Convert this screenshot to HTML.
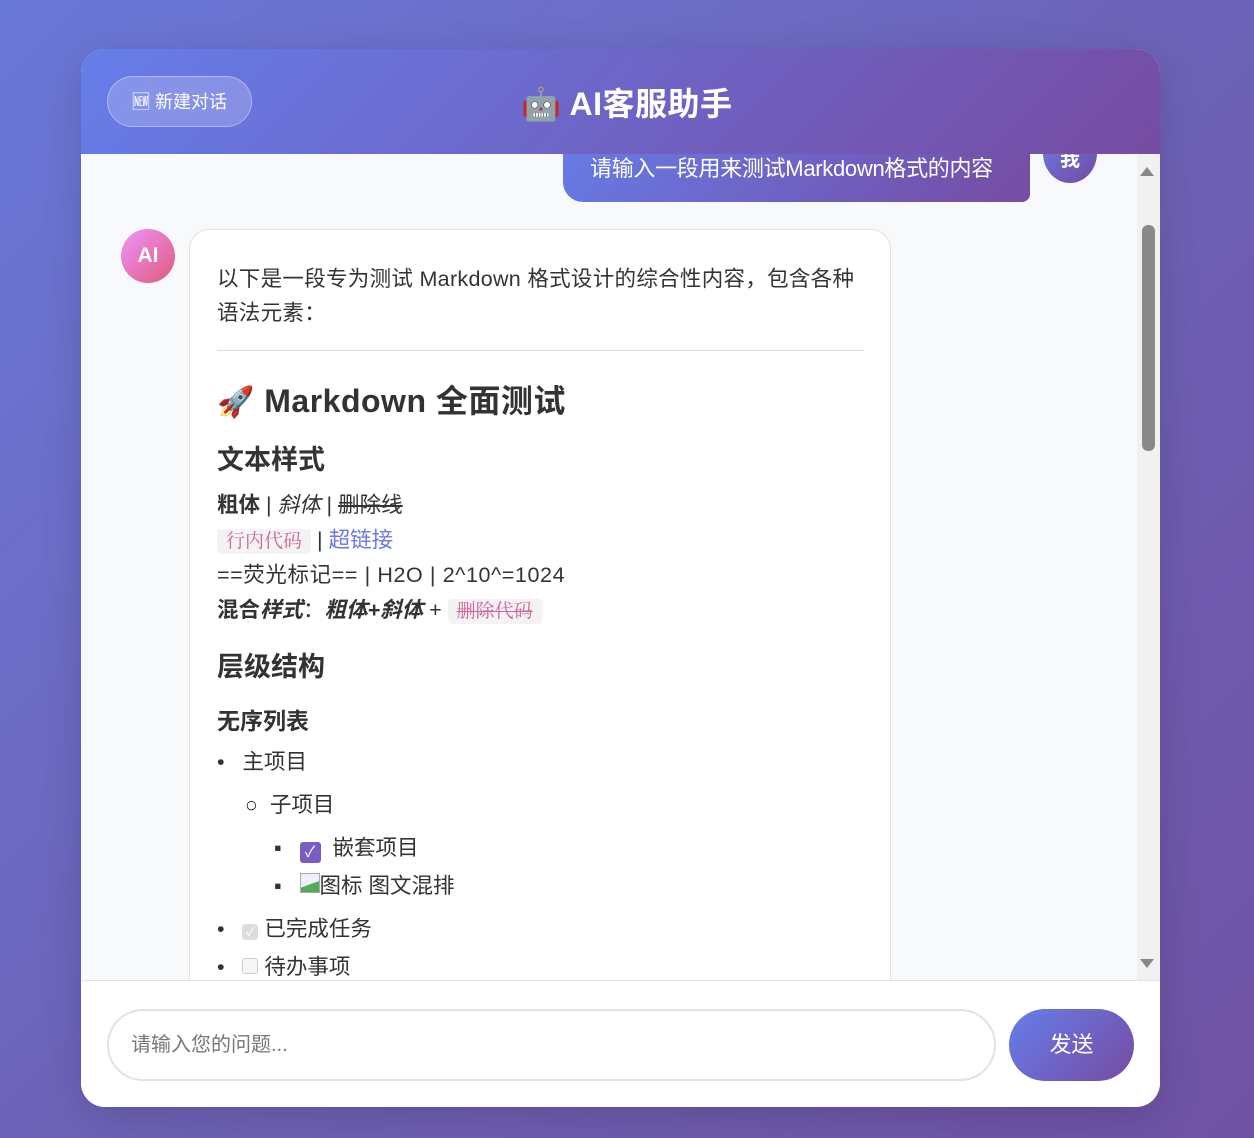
<!DOCTYPE html>
<html><head><meta charset="utf-8"><style>
*{margin:0;padding:0;box-sizing:border-box}
body{width:1254px;height:1138px;overflow:hidden;background:linear-gradient(135deg,#6a78d8 0%,#6d63b8 50%,#6f52a4 100%);font-family:"Liberation Sans","Noto Sans CJK SC",sans-serif;color:#333;position:relative}
.box{position:absolute;left:81px;top:49px;width:1079px;height:1058px;border-radius:24px;overflow:hidden;background:#f8f9fa;box-shadow:0 10px 40px rgba(0,0,0,.15)}
.hdr{position:absolute;left:0;top:0;width:1079px;height:105px;background:linear-gradient(135deg,#667eea,#764ba2);z-index:3}
.newb{position:absolute;left:26px;top:27px;width:145px;height:51px;border-radius:26px;background:rgba(255,255,255,.2);border:1px solid rgba(255,255,255,.35);color:#fff;font-size:18px;line-height:51px;text-align:center}
.title{position:absolute;left:440px;top:32px;color:#fff;font-size:32px;font-weight:bold;line-height:46px;letter-spacing:0.5px}
.abs{position:absolute}
.ub{left:482px;top:70px;width:467px;height:83px;border-radius:0 0 8px 20px;background:linear-gradient(135deg,#667eea,#764ba2);color:#fff;font-size:22px;padding-top:32px;padding-left:27px;letter-spacing:-0.3px}
.ua{left:962px;top:74px;width:54px;height:60px;border-radius:50%;background:linear-gradient(135deg,#667eea,#764ba2);color:#fff;font-weight:bold;font-size:20px;text-align:center;padding-top:20px}
.aa{left:40px;top:180px;width:54px;height:54px;border-radius:50%;background:linear-gradient(135deg,#f093fb,#e05a7c);color:#fff;font-weight:bold;font-size:21px;text-align:center;line-height:54px}
.bub{left:108px;top:180px;width:702px;height:800px;background:#fff;border:1px solid #e3e3e3;border-radius:20px;padding:30px 27px;font-size:21.5px}
.sb{left:1056px;top:105px;width:23px;height:826px;background:#f1f1f1}
.thumb{left:1061px;top:176px;width:13px;height:226px;background:#8a8a8a;border-radius:6px}
.inp{position:absolute;left:0;top:931px;width:1079px;height:127px;background:#fff;border-top:1px solid #e2e2e2;z-index:3}
.field{position:absolute;left:26px;top:28px;width:889px;height:72px;border:2px solid #e2e2e2;border-radius:36px;font-size:20px;color:#777;padding-left:22px;line-height:68px}
.send{position:absolute;left:928px;top:28px;width:125px;height:72px;border-radius:36px;background:linear-gradient(135deg,#667eea,#764ba2);color:#fff;font-size:22px;text-align:center;line-height:72px}
.l{position:absolute;left:27px;white-space:nowrap}
code{background:#f3f3f3;color:#d0639a;border-radius:4px;padding:2px 9px;font-size:19px;font-family:"Liberation Serif","Noto Serif CJK SC",serif}
</style></head><body>
<div class="box">
<div class="hdr">
<div class="newb">🆕 新建对话</div>
<div class="title">🤖 AI客服助手</div>
</div>
<div class="abs ub">请输入一段用来测试Markdown格式的内容</div>
<div class="abs ua">我</div>
<div class="abs aa">AI</div>
<div class="abs bub">
<div class="l" style="top:32px;line-height:34px;letter-spacing:0.3px">以下是一段专为测试 Markdown 格式设计的综合性内容，包含各种<br>语法元素：</div>
<div class="abs" style="left:27px;top:120px;width:647px;border-top:1px solid #ddd"></div>
<div class="l" style="top:146px;font-size:32px;font-weight:bold;letter-spacing:0.5px"><span style="font-size:30px">🚀</span> Markdown 全面测试</div>
<div class="l" style="top:208px;font-size:27px;font-weight:bold">文本样式</div>
<div class="l" style="top:258px"><b>粗体</b> | <i>斜体</i> | <s>删除线</s></div>
<div class="l" style="top:293px"><code>行内代码</code> | <span style="color:#6b78e0">超链接</span></div>
<div class="l" style="top:328px;letter-spacing:0.6px">==荧光标记== | H2O | 2^10^=1024</div>
<div class="l" style="top:363px"><b>混合<i>样式</i></b>：<b><i>粗体+斜体</i></b> + <code><s>删除代码</s></code></div>
<div class="l" style="top:415px;font-size:27px;font-weight:bold">层级结构</div>
<div class="l" style="top:472px;font-size:23px;font-weight:bold">无序列表</div>
<div class="l" style="top:515px">•&nbsp;&nbsp; 主项目</div>
<div class="l" style="top:558px;left:55px">○&nbsp; 子项目</div>
<div class="l" style="top:601px;left:84px">▪&nbsp;&nbsp; <span style="display:inline-block;width:21px;height:21px;background:#7b5cc4;border-radius:3px;color:#fff;font-size:15px;text-align:center;line-height:21px;vertical-align:-2px">✓</span>&nbsp; 嵌套项目</div>
<div class="l" style="top:639px;left:84px">▪&nbsp;&nbsp; <span style="display:inline-block;width:20px;height:20px;border:1px solid #aaa;background:linear-gradient(160deg,#eef 55%,#5a5 56%)"></span>图标 图文混排</div>
<div class="l" style="top:682px">•&nbsp;&nbsp; <span style="display:inline-block;width:16px;height:16px;background:#ddd;border-radius:3px;color:#fff;font-size:12px;text-align:center;line-height:16px">✓</span> 已完成任务</div>
<div class="l" style="top:720px">•&nbsp;&nbsp; <span style="display:inline-block;width:16px;height:16px;border:1px solid #ccc;background:#f6f6f6;border-radius:3px"></span> 待办事项</div>
</div>
<div class="abs sb"></div>
<div class="abs" style="left:1059px;top:118px;border:7px solid transparent;border-bottom:9px solid #888;border-top:0"></div>
<div class="abs thumb"></div>
<div class="abs" style="left:1059px;top:910px;border:7px solid transparent;border-top:9px solid #888;border-bottom:0"></div>
<div class="inp">
<div class="field">请输入您的问题...</div>
<div class="send">发送</div>
</div>
</div>
</body></html>
